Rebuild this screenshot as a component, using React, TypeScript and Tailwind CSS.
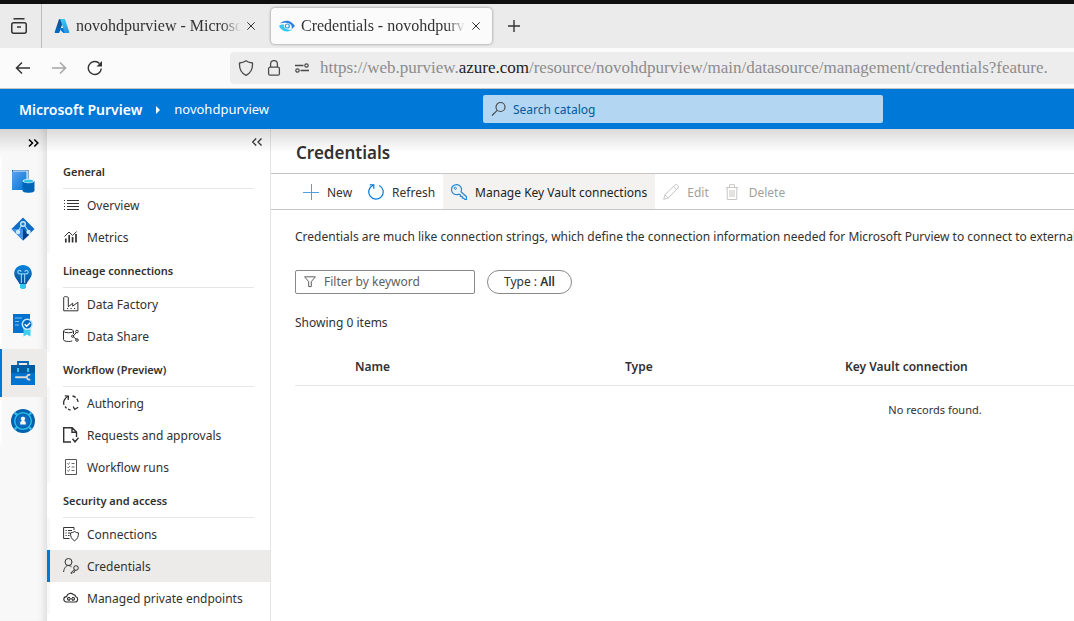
import type { ReactNode } from "react";

type IconProps = { children: ReactNode; className?: string; box?: string };

function Svg({ children, className = "size-4", box = "0 0 16 16" }: IconProps) {
  return (
    <svg
      viewBox={box}
      className={`shrink-0 ${className}`}
      fill="none"
      stroke="currentColor"
      strokeWidth="1"
      aria-hidden="true"
    >
      {children}
    </svg>
  );
}

/* ---------- browser icons ---------- */

const FirefoxView = () => (
  <Svg className="size-4" >
    <rect x="0.75" y="4.75" width="14.5" height="10.5" rx="2" strokeWidth="1.5" />
    <path d="M2.5 1.2C3 .8 3.600 .75 4.200 .75h7.600c.6 0 1.200 0 1.700 .5M6 9h4" strokeWidth="1.500" />
  </Svg>
);

const AzureLogo = () => (
  <Svg className="size-4" box="0 0 96 96">
    <defs>
      <linearGradient id="az1" x1="58" y1="10" x2="18" y2="92" gradientUnits="userSpaceOnUse">
        <stop stopColor="#114a8b" />
        <stop offset="1" stopColor="#0669bc" />
      </linearGradient>
      <linearGradient id="az2" x1="46" y1="8" x2="78" y2="88" gradientUnits="userSpaceOnUse">
        <stop stopColor="#3ccbf4" />
        <stop offset="1" stopColor="#2892df" />
      </linearGradient>
    </defs>
    <path stroke="none" fill="url(#az1)" d="M33.300 6.500h26L32.400 86.500a4.100 4.100 0 0 1-3.900 2.800H8.200a4.100 4.100 0 0 1-3.900-5.500L29.400 9.300a4.100 4.100 0 0 1 3.900-2.800z" />
    <path stroke="none" fill="#0078d4" d="M71.200 60.300H29.900a1.900 1.900 0 0 0-1.300 3.300l26.500 24.800a4.200 4.200 0 0 0 2.800 1.100h23.400z" />
    <path stroke="none" fill="url(#az2)" d="M66.600 9.400a4.100 4.100 0 0 0-3.900-2.800H33.600a4.100 4.100 0 0 1 3.900 2.800l25.200 74.500a4.100 4.100 0 0 1-3.900 5.500h29.100a4.100 4.100 0 0 0 3.900-5.500z" />
  </Svg>
);

const PurviewLogo = () => (
  <Svg className="size-4">
    <path stroke="none" fill="#2b7de0" d="M1.200 5.500C4 2.400 9.500 1.800 12.600 4.500c1.600 1.300 2.900 2.700 3.300 3.600-1 1.300-2.100 2.300-3.300 3 .9-3.200-1-5.600-4-6C5.900 4.700 3.200 4.800 1.200 5.500z" />
    <path stroke="none" fill="#35c5f1" d="M0 8c.8 1.600 2.200 3.400 4.200 4.400 3.400 1.700 7 1.100 9.600-1.200-2 .7-3.600.7-5 .4C6 11 4.400 9 4.700 6.300 2.700 6.200 1 7 0 8z" />
    <circle cx="8.300" cy="8" r="2" fill="#eef8fe" stroke="#2f9be8" strokeWidth="1.200" />
  </Svg>
);

const CloseIcon = () => (
  <Svg className="size-2" box="0 0 8 8">
    <path d="M.3 .3l7.400 7.400M7.700 .3L.3 7.700" strokeWidth="1" />
  </Svg>
);

const TabPlus = () => (
  <Svg className="size-3" box="0 0 12 12">
    <path d="M6 0v12M0 6h12" strokeWidth="1.400" />
  </Svg>
);

const BackIcon = () => (
  <Svg className="size-4">
    <path d="M15 8H1.800M7 2.500L1.500 8 7 13.500" strokeWidth="1.500" />
  </Svg>
);

const ForwardIcon = () => (
  <Svg className="size-4">
    <path d="M1 8h13.200M9 2.500L14.500 8 9 13.500" strokeWidth="1.500" />
  </Svg>
);

const ReloadIcon = () => (
  <Svg className="size-4">
    <path d="M14.300 8.500A6.500 6.500 0 1 1 12.500 3.500" strokeWidth="1.400" />
    <path d="M15 1v5.500H9.500z" fill="currentColor" stroke="none" />
  </Svg>
);

const ShieldIcon = () => (
  <Svg className="size-4">
    <path d="M8 .8C6.500 2 4.200 2.800 1.500 3c-.3 5.500 1.500 10 6.500 12.300C13 13 14.800 8.500 14.500 3 11.800 2.800 9.500 2 8 .8z" strokeWidth="1.300" strokeLinejoin="round" />
  </Svg>
);

const LockIcon = () => (
  <Svg className="size-4">
    <rect x="2.600" y="7.200" width="10.800" height="8" rx="1.500" strokeWidth="1.300" />
    <path d="M4.600 7V4a3.400 3.400 0 0 1 6.800 0v3" strokeWidth="1.300" />
  </Svg>
);

const PermissionsIcon = () => (
  <Svg className="size-4">
    <path d="M1 5.500h8.500M6.500 10.500H15" strokeWidth="1.300" />
    <circle cx="12.500" cy="5.500" r="1.700" strokeWidth="1.200" />
    <circle cx="3.500" cy="10.500" r="1.700" strokeWidth="1.200" />
  </Svg>
);

/* ---------- chevrons ---------- */

const DoubleRight = () => (
  <Svg className="size-3" box="0 0 12 12">
    <path d="M1 2.500L4.500 6 1 9.500M6.300 2.500L9.800 6 6.300 9.500" strokeWidth="1.600" />
  </Svg>
);

const DoubleLeft = () => (
  <Svg className="size-3" box="0 0 12 12">
    <path d="M5.200 2.500L1.700 6l3.500 3.500M10.500 2.500L7 6l3.500 3.500" strokeWidth="1.300" />
  </Svg>
);

/* ---------- rail icons ---------- */

const CatalogIcon = () => (
  <Svg className="size-6" box="0 0 24 24">
    <defs>
      <linearGradient id="cat" x1="0" y1="0" x2="1" y2="1">
        <stop stopColor="#5ea0ef" />
        <stop offset="1" stopColor="#0078d4" />
      </linearGradient>
    </defs>
    <path stroke="none" fill="#0f5ea8" d="M1 1h16.500v20H1z" />
    <path stroke="none" fill="#e8f3fc" d="M2 1.500h14.800v10H2z" />
    <path stroke="none" fill="url(#cat)" d="M1 2.500h14.500V21H1z" />
    <path stroke="none" fill="#0064b8" d="M11.500 12v9.500c0 1.300 2.700 2.300 6 2.300s6-1 6-2.300V12z" />
    <ellipse stroke="none" fill="#d5eefb" cx="17.500" cy="12" rx="6" ry="2.200" />
    <ellipse stroke="none" fill="#32c4e8" cx="17.500" cy="12.200" rx="4.600" ry="1.400" />
  </Svg>
);

const DataMapIcon = () => (
  <Svg className="size-6" box="0 0 24 24">
    <path stroke="none" fill="#0f6cc4" d="M12 .5L23.500 12 12 23.500.5 12z" />
    <path stroke="none" fill="#3f92e6" d="M.5 12L12 12v11.500z" />
    <path stroke="none" fill="#003f8a" d="M12 12l6 6-6 5.500z" />
    <path stroke="#a8dcf6" strokeWidth="1.200" d="M10.800 8L7 14.500M13.200 8l4.300 6.500" />
    <circle cx="12" cy="7" r="2.300" fill="#1b7fd8" stroke="#c2e8fa" strokeWidth="1.400" />
    <circle cx="7" cy="15" r="2.200" fill="#c9ecfb" stroke="none" />
    <circle cx="17.500" cy="15" r="2.200" fill="#c9ecfb" stroke="none" />
  </Svg>
);

const InsightsIcon = () => (
  <Svg className="size-6" box="0 0 24 24">
    <defs>
      <linearGradient id="bulb" x1="0" y1="0" x2="0" y2="1">
        <stop stopColor="#0a84dc" />
        <stop offset="1" stopColor="#004f9b" />
      </linearGradient>
    </defs>
    <path stroke="none" fill="url(#bulb)" d="M12 0C7 0 3.200 3.800 3.200 8.400c0 4.600 4 6.600 5.300 10.600h7c1.300-4 5.300-6 5.300-10.600C20.800 3.800 17 0 12 0z" />
    <path stroke="#8ccdf0" strokeWidth="1.200" d="M10.400 18V8.800H8.300a1.700 1.700 0 1 1 1.900-1.900M13.600 18V8.800h2.100a1.700 1.700 0 1 0-1.900-1.900M10.400 8.800h3.200" />
    <path stroke="none" fill="#32c8ee" d="M9 19h6v3.200L13.500 24h-3L9 22.200z" />
  </Svg>
);

const PolicyIcon = () => (
  <Svg className="size-6" box="0 0 24 24">
    <path stroke="none" fill="#0072cf" d="M2 1h17v19H2z" />
    <path stroke="#7cc0f0" d="M4 5h7M4 8.500h4M4 12h4" strokeWidth="1" />
    <path stroke="none" fill="#40cdf0" d="M12.500 15v8.500l3.500-2 3.500 2V15z" />
    <circle cx="16.300" cy="11.300" r="5" fill="#0068bd" stroke="#c3e9fb" strokeWidth="1.600" />
    <path stroke="#ffffff" strokeWidth="1.500" d="M13.700 11.300l2 2 3.500-3.600" />
  </Svg>
);

const ManagementIcon = () => (
  <Svg className="size-6" box="0 0 24 24">
    <path d="M7 5V1h10v4" stroke="#0067b8" strokeWidth="1.800" />
    <path stroke="none" fill="#005ba1" d="M0 4h24v8.500H0z" />
    <path stroke="none" fill="#0072cf" d="M0 12h24v12H0z" />
    <path stroke="none" fill="#37c2f1" d="M6 7h2v4H6zM16 7h2v4h-2z" />
    <path stroke="#dcd9d6" strokeWidth="2" strokeLinecap="round" d="M5 16.300h10" />
    <path stroke="#dcd9d6" strokeWidth="1.800" d="M19.200 14a2.400 2.400 0 1 0 0 4.400" />
  </Svg>
);

const PrivacyIcon = () => (
  <Svg className="size-6" box="0 0 24 24">
    <circle cx="12" cy="12" r="12" fill="#0062ad" stroke="none" />
    <circle cx="12" cy="12" r="8.300" stroke="#2eb9e8" strokeWidth="1.500" />
    <path d="M3.500 3.500l3 3M20.500 3.500l-3 3M3.500 20.500l3-3M20.500 20.500l-3-3" stroke="#2eb9e8" strokeWidth="2.400" />
    <circle cx="12" cy="12" r="6.600" fill="#0a6fc2" stroke="#0a5fae" strokeWidth="1" />
    <path stroke="none" fill="#f3f9fe" d="M12 7.700a2 2 0 0 1 1.200 3.700l1.600 1.900v2.200H9.200v-2.200l1.600-1.900A2 2 0 0 1 12 7.700z" />
  </Svg>
);

/* ---------- navigation icons ---------- */

const OverviewIcon = () => (
  <Svg>
    <path shapeRendering="crispEdges" d="M4 3.500h12M4 6.500h12M4 9.500h12M4 12.500h12M1 3.500h1M1 6.500h1M1 9.500h1M1 12.500h1" />
  </Svg>
);

const MetricsIcon = () => (
  <Svg>
    <path strokeWidth="1.700" d="M2.800 13.500V9.500M6.200 13.500V6M9.600 13.500V8M13 13.500V5" />
    <path d="M1.500 7.500L6 3l3.600 3.500 4-4" />
  </Svg>
);

const FactoryIcon = () => (
  <Svg>
    <path d="M.7 14.800V1.500C1 .8 1.500.6 2.500.6S5 .8 5.300 1.500v9.200l4.400-3.500v3l5.200-4v8.600H.7z" />
    <path d="M4 12.500h1.200M7.500 12.500h1.200M11 12.500h1.200" strokeWidth="1.200" />
  </Svg>
);

const ShareIcon = () => (
  <Svg>
    <ellipse cx="5.500" cy="3" rx="5" ry="1.800" />
    <path d="M.5 3v8.700c0 1 2.200 1.800 5 1.800 1.500 0 2.800-.2 3.700-.6M10.500 3v3" />
    <path d="M10 8.300L13.400 4.500M10 8.300l3.400 3.200" />
    <circle cx="9.600" cy="8.300" r="1.100" />
    <circle cx="14" cy="3.500" r="1.300" />
    <circle cx="14" cy="12" r="1.300" />
  </Svg>
);

const AuthoringIcon = () => (
  <Svg>
    <g strokeWidth="1.300">
      <path d="M.9 9.800A7 7 0 0 1 5 1.500" />
      <path d="M1.800 .9l3.600 .3L5.200 5" />
      <path d="M9.500 1a7 7 0 0 1 5.600 7.500" strokeDasharray="3.500 1.500" />
      <path d="M2 11.500l1.500 1.800M5 14.200l2.500 .9M10.200 11.500l1.500 2.800 3.500-2" />
    </g>
  </Svg>
);

const RequestsIcon = () => (
  <Svg>
    <path strokeWidth="1.400" d="M8 15H.7V.7h8.500L13.500 5v5M9 .7V5.200h4.500M9.500 11.800l2.500 3 3.500-4" />
  </Svg>
);

const RunsIcon = () => (
  <Svg className="size-4 text-[#555555]">
    <path d="M2.500 .5h11v15h-11z" />
    <path d="M8.500 4.500h3M8.500 8h3M8.500 11.500h3M4.200 4.300l1 1L7 3.500M4.200 7.800l1 1L7 7M4.200 11.300l1 1 1.800-1.800" strokeWidth=".9" />
  </Svg>
);

const ConnectionsIcon = () => (
  <Svg>
    <path d="M6.500 12.500H.6V1.500H11V4" />
    <path d="M2.500 4.500h1.200M2.500 7h1.200M2.500 9.500h1.200M5 4.500h4M5 7h2M5 9.500h1.500" />
    <path d="M11.500 5.500c-1 .8-2.500 1.300-4 1.400 0 3.500 .8 6.200 4 7.900 3.200-1.700 4-4.400 4-7.900-1.500-.1-3-.6-4-1.400z" />
  </Svg>
);

const CredentialsIcon = () => (
  <Svg>
    <circle cx="5.500" cy="4" r="3.500" />
    <path d="M.6 14c.3-3.600 2.200-6.500 4.900-6.500 1.200 0 2.200 .5 3 1.300" />
    <circle cx="13" cy="10" r="2.300" />
    <path d="M11.200 11.600L7.800 15l1.200 .5 1.200-1.200h1.200v-1.200l1-1" />
  </Svg>
);

const CloudIcon = () => (
  <Svg>
    <path strokeWidth="1.200" d="M3.500 12h9a2.700 2.700 0 0 0 .4-5.200 2.900 2.900 0 0 0-2.500-2.200A4 4 0 0 0 3.600 6.600a2.700 2.700 0 0 0-.1 5.400z" />
    <path d="M7 7.500H5.800a1.300 1.300 0 0 0 0 2.600H7M9 7.500h1.200a1.300 1.300 0 0 1 0 2.600H9M6.300 8.800h3.400" strokeWidth="1.200" />
  </Svg>
);

/* ---------- command bar icons ---------- */

const AddIcon = () => (
  <Svg className="size-4 text-[#4aa0e0]">
    <path shapeRendering="crispEdges" d="M8.500 0v16M0 8.500h16" />
  </Svg>
);

const RefreshIcon = () => (
  <Svg className="size-4 text-[#0078d4]">
    <path strokeWidth="1.200" d="M5.200 1.300a7.200 7.200 0 1 0 6 .2" />
    <path strokeWidth="1.200" d="M1.800 .8h4v4" />
  </Svg>
);

const KeyIcon = () => (
  <Svg className="size-4 text-[#2a86d2]">
    <path d="M10 7.800A5 5 0 1 0 7.500 10.200L9.300 10.500v1.800h2v1.800h1.300l1.200 1.300h1.700v-2.600z" strokeLinejoin="round" strokeWidth="1.200" />
    <circle cx="4.300" cy="4.300" r="1.100" />
  </Svg>
);

const EditIcon = () => (
  <Svg className="size-4 text-[#c8c6c4]">
    <path d="M.7 15.300L2 10.800 11.800 1a2.300 2.300 0 0 1 3.200 3.200L5.200 14zM2 10.800L5.200 14M10.500 2.300l3.200 3.200" />
  </Svg>
);

const DeleteIcon = () => (
  <Svg className="size-4 text-[#c8c6c4]">
    <path d="M1 3.500h12M4.500 3V.7h5V3M2.200 3.500v12h9.600v-12M5 6v7M7 6v7M9 6v7" />
  </Svg>
);

const FunnelIcon = () => (
  <Svg className="size-3 text-[#605e5c]" box="0 0 12 12">
    <path d="M.6 .8h10.800L7.300 5.600v5H4.700v-5z" />
  </Svg>
);

const SearchIcon = () => (
  <Svg className="size-4 text-[#4a4a4a]">
    <circle cx="9.500" cy="6" r="4.500" strokeWidth="1.200" />
    <path d="M6.200 9.300L1 14.500" strokeWidth="1.200" />
  </Svg>
);

/* ---------- data ---------- */

const rail = [
  { label: "Data catalog", icon: <CatalogIcon /> },
  { label: "Data map", icon: <DataMapIcon /> },
  { label: "Data estate insights", icon: <InsightsIcon /> },
  { label: "Data policy", icon: <PolicyIcon /> },
  { label: "Management", icon: <ManagementIcon />, active: true },
  { label: "Privacy", icon: <PrivacyIcon /> },
];

const sections = [
  {
    title: "General",
    items: [
      { label: "Overview", icon: <OverviewIcon /> },
      { label: "Metrics", icon: <MetricsIcon /> },
    ],
  },
  {
    title: "Lineage connections",
    items: [
      { label: "Data Factory", icon: <FactoryIcon /> },
      { label: "Data Share", icon: <ShareIcon /> },
    ],
  },
  {
    title: "Workflow (Preview)",
    items: [
      { label: "Authoring", icon: <AuthoringIcon /> },
      { label: "Requests and approvals", icon: <RequestsIcon /> },
      { label: "Workflow runs", icon: <RunsIcon /> },
    ],
  },
  {
    title: "Security and access",
    items: [
      { label: "Connections", icon: <ConnectionsIcon /> },
      { label: "Credentials", icon: <CredentialsIcon /> },
      { label: "Managed private endpoints", icon: <CloudIcon /> },
    ],
  },
];

/* ---------- page parts ---------- */

function BrowserChrome() {
  return (
    <div className="font-['Liberation_Serif',serif] text-[#333333]">
      <div className="flex h-12 border-t-4 border-[#0f0f0f] bg-[#ebebeb]">
        <button aria-label="View recent browsing" className="flex w-[42px] items-center justify-center border-r border-[#bdbdbd] pr-1">
          <FirefoxView />
        </button>
        <div className="flex w-[228px] items-center gap-1.5 pr-[15px] pl-3">
          <AzureLogo />
          <span className="min-w-0 flex-1 overflow-hidden text-base whitespace-nowrap [mask-image:linear-gradient(to_right,#000_88%,transparent)]">
            novohdpurview - Microsoft Purview
          </span>
          <button aria-label="Close tab"><CloseIcon /></button>
        </div>
        <div className="my-1 ml-px flex w-[221px] items-center gap-1.5 rounded bg-[#fbfbfb] pr-3 pl-2 shadow-[0_0_3px_rgba(0,0,0,0.45)]">
          <PurviewLogo />
          <span className="min-w-0 flex-1 overflow-hidden text-base whitespace-nowrap [mask-image:linear-gradient(to_right,#000_88%,transparent)]">
            Credentials - novohdpurview
          </span>
          <button aria-label="Close tab"><CloseIcon /></button>
        </div>
        <button aria-label="New tab" className="ml-4 flex items-center"><TabPlus /></button>
      </div>
      <div className="flex h-[41px] items-center border-b border-[#c4c4c4] bg-[#fbfbfb] pl-[15px]">
        <button aria-label="Back"><BackIcon /></button>
        <button aria-label="Forward" className="ml-5 text-[#a5a5a5]"><ForwardIcon /></button>
        <button aria-label="Reload" className="ml-5"><ReloadIcon /></button>
        <div className="ml-[127px] flex h-8 min-w-0 flex-1 items-center gap-3 overflow-hidden rounded-l bg-[#ededed] pl-2 text-[#4a4a4a]">
          <ShieldIcon />
          <LockIcon />
          <PermissionsIcon />
          <span className="-ml-0.5 text-[17px] whitespace-nowrap text-[#8c8c8c]">
            https://web.purview.<span className="text-[#222222]">azure.com</span>
            /resource/novohdpurview/main/datasource/management/credentials?feature.
          </span>
        </div>
      </div>
    </div>
  );
}

function AppHeader() {
  return (
    <header className="flex h-10 items-center bg-[#0078d7] text-white">
      <div className="flex w-[483px] shrink-0 items-center pt-0.5 pl-[19px]">
        <a href="#home" className="text-sm font-semibold">Microsoft Purview</a>
        <svg viewBox="0 0 4 8" className="mr-3.5 ml-3.5 h-2 w-1" fill="currentColor" aria-hidden="true">
          <path d="M0 0l4 4-4 4z" />
        </svg>
        <a href="#account" className="text-[13px]">novohdpurview</a>
      </div>
      <label className="flex h-7 w-[400px] items-center gap-1.5 rounded-xs bg-[#b3d7f3] pl-2">
        <SearchIcon />
        <input
          aria-label="Search catalog"
          placeholder="Search catalog"
          className="min-w-0 flex-1 bg-transparent pt-0.5 text-xs outline-none placeholder:text-[#005a9e]"
        />
      </label>
    </header>
  );
}

function Rail() {
  return (
    <nav aria-label="Hubs" className="flex w-[47px] shrink-0 flex-col bg-[#f8f8f8] shadow-[inset_-8px_0_8px_-6px_rgba(0,0,0,0.13)]">
      <button aria-label="Expand" className="flex h-7 items-center justify-end pr-[7px] text-black">
        <DoubleRight />
      </button>
      {rail.map((r) => (
        <a
          key={r.label}
          href="#hub"
          aria-label={r.label}
          className={`flex h-12 items-center border-l-2 pl-[9px] ${
            r.active ? "border-[#0078d4] bg-[#edebe9]" : "border-[#fdfdfd]"
          }`}
        >
          {r.icon}
        </a>
      ))}
    </nav>
  );
}

function Sidebar() {
  return (
    <nav aria-label="Management" className="w-56 shrink-0 border-r border-[#e4e4e4] bg-white">
      <div className="flex h-[25px] items-center justify-end pr-[7px]">
        <button aria-label="Collapse"><DoubleLeft /></button>
      </div>
      {sections.map((s) => (
        <section key={s.title}>
          <h2 className="mr-4 ml-4 flex h-[35px] items-center border-b border-[#e6e6e6] pt-0.5 text-[11px] font-semibold">
            {s.title}
          </h2>
          <ul>
            {s.items.map((i) => (
              <li key={i.label}>
                <a
                  href="#item"
                  className={`flex h-8 items-center gap-2 border-l-3 pl-[13px] text-xs whitespace-nowrap ${
                    i.label === "Credentials" ? "border-[#0078d4] bg-[#edebe9]" : "border-[#f8f8f8]"
                  }`}
                >
                  {i.icon}
                  <span className="pt-0.5">{i.label}</span>
                </a>
              </li>
            ))}
          </ul>
        </section>
      ))}
    </nav>
  );
}

function Command({ icon, label, active, disabled }: { icon: ReactNode; label: string; active?: boolean; disabled?: boolean }) {
  return (
    <button
      disabled={disabled}
      className={`flex items-center gap-2 px-2 whitespace-nowrap ${active ? "bg-[#f3f2f1] text-[#201f1e]" : ""} ${
        disabled ? "text-[#a19f9d]" : ""
      }`}
    >
      {icon}
      <span className="pt-0.5">{label}</span>
    </button>
  );
}

function Content() {
  return (
    <main className="min-w-0 flex-1 overflow-hidden bg-white text-xs">
      <h1 className="flex h-11 items-center pt-1 pl-[25px] text-[17px] font-semibold">Credentials</h1>
      <div className="flex h-[37px] border-y border-[#c8c6c4] pl-6">
        <Command icon={<AddIcon />} label="New" />
        <Command icon={<RefreshIcon />} label="Refresh" />
        <Command icon={<KeyIcon />} label="Manage Key Vault connections" active />
        <Command icon={<EditIcon />} label="Edit" disabled />
        <Command icon={<DeleteIcon />} label="Delete" disabled />
      </div>
      <div className="pl-6">
        <p className="mt-[17px] leading-5 whitespace-nowrap">
          Credentials are much like connection strings, which define the connection information needed for Microsoft
          Purview to connect to external data sources.
        </p>
        <div className="mt-[23px] flex gap-3">
          <label className="flex h-6 w-[180px] items-center gap-2 rounded-xs border border-[#8a8886] pl-2">
            <FunnelIcon />
            <input
              aria-label="Filter by keyword"
              placeholder="Filter by keyword"
              className="min-w-0 flex-1 bg-transparent outline-none placeholder:text-[#605e5c]"
            />
          </label>
          <button className="flex h-6 items-center rounded-full border border-[#8a8886] px-4 whitespace-pre">
            Type : <span className="font-semibold">All</span>
          </button>
        </div>
        <p className="mt-[19px] leading-5">Showing 0 items</p>
        <table className="mt-4 w-[1280px] table-fixed text-left">
          <thead>
            <tr className="h-9 border-b border-[#e6e6e6]">
              <th className="w-[60px]"><span className="sr-only">Select</span></th>
              <th className="w-[270px] font-semibold">Name</th>
              <th className="w-[220px] font-semibold">Type</th>
              <th className="font-semibold">Key Vault connection</th>
            </tr>
          </thead>
          <tbody>
            <tr className="h-12">
              <td colSpan={4} className="pt-0.5 text-center text-[11px]">No records found.</td>
            </tr>
          </tbody>
        </table>
      </div>
    </main>
  );
}

export default function App() {
  return (
    <div className="flex h-screen flex-col overflow-hidden bg-white font-['Noto_Sans',sans-serif] text-[#323130]">
      <BrowserChrome />
      <AppHeader />
      <div className="relative flex min-h-0 flex-1">
        <Rail />
        <Sidebar />
        <Content />
        <div className="pointer-events-none absolute inset-x-0 top-0 h-6 bg-linear-to-b from-black/14 to-transparent" />
      </div>
    </div>
  );
}
